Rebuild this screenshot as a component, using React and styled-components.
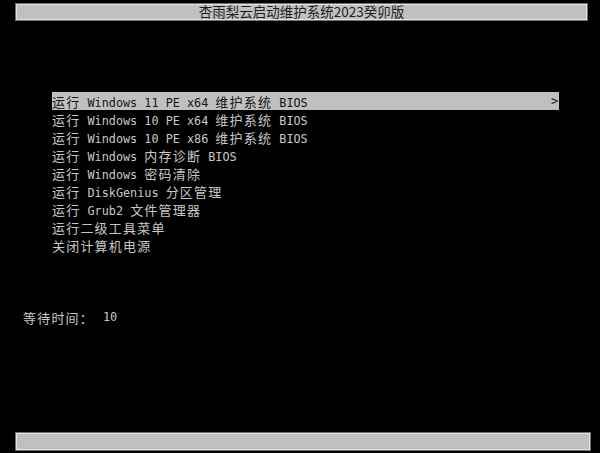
import styled, { createGlobalStyle } from "styled-components";

const GlobalStyle = createGlobalStyle`
  html, body {
    margin: 0;
    padding: 0;
    background: #000;
  }
`;

const Screen = styled.div`
  width: 600px;
  height: 453px;
  background: #000;
  display: flex;
  flex-direction: column;
  font-family: "DejaVu Sans Mono", "Liberation Mono", "Noto Sans CJK SC", monospace;
  color: #c8c8c8;
  overflow: hidden;
`;

const Bar = styled.div`
  box-sizing: border-box;
  height: ${({ h }) => h}px;
  margin: ${({ m }) => m};
  background: #c0c0c0;
  border: 1px solid #707070;
  box-shadow: inset 0 0 0 1px #e4e4e4;
  display: flex;
  align-items: center;
  justify-content: center;
`;

const Title = styled.span`
  font-family: "Noto Sans CJK SC", "Noto Sans", sans-serif;
  font-size: 13.5px;
  color: #1e1e1e;
  line-height: 1;
`;

const Menu = styled.div`
  margin: 71px 0 0 52px;
  display: flex;
  flex-direction: column;
`;

const Row = styled.div`
  width: 507px;
  height: 18px;
  display: flex;
  align-items: center;
  justify-content: space-between;
  font-size: 11.8px;
  white-space: pre;
  background: ${({ active }) => (active ? "#c0c0c0" : "transparent")};
  color: ${({ active }) => (active ? "#151515" : "#c8c8c8")};
`;

const Cjk = styled.span`
  font-family: "Noto Sans CJK SC", sans-serif;
  font-size: 13px;
  letter-spacing: 1.2px;
`;

const Arrow = styled.span`
  margin-right: 1px;
  font-size: 11.8px;
`;

const Wait = styled.div`
  margin: 54px 0 0 23px;
  height: 18px;
  display: flex;
  align-items: center;
  font-size: 11.8px;
  white-space: pre;
`;

const Count = styled.span`
  margin-left: 9px;
`;

const items = [
  ["运行", " Windows 11 PE x64 ", "维护系统", " BIOS"],
  ["运行", " Windows 10 PE x64 ", "维护系统", " BIOS"],
  ["运行", " Windows 10 PE x86 ", "维护系统", " BIOS"],
  ["运行", " Windows ", "内存诊断", " BIOS"],
  ["运行", " Windows ", "密码清除"],
  ["运行", " DiskGenius ", "分区管理"],
  ["运行", " Grub2 ", "文件管理器"],
  ["运行二级工具菜单"],
  ["关闭计算机电源"],
];

function App() {
  return (
    <Screen>
      <GlobalStyle />
      <Bar h={18} m="3px 12px 0 15px">
        <Title>杏雨梨云启动维护系统2023癸卯版</Title>
      </Bar>
      <Menu>
        {items.map((parts, i) => (
          <Row key={i} active={i === 0}>
            <span>
              {parts.map((p, j) =>
                j % 2 === 0 ? <Cjk key={j}>{p}</Cjk> : <span key={j}>{p}</span>
              )}
            </span>
            {i === 0 && <Arrow>&gt;</Arrow>}
          </Row>
        ))}
      </Menu>
      <Wait>
        <Cjk>等待时间：</Cjk>
        <Count>10</Count>
      </Wait>
      <Bar h={19} m="auto 9px 2px 15px" />
    </Screen>
  );
}

export default App;
